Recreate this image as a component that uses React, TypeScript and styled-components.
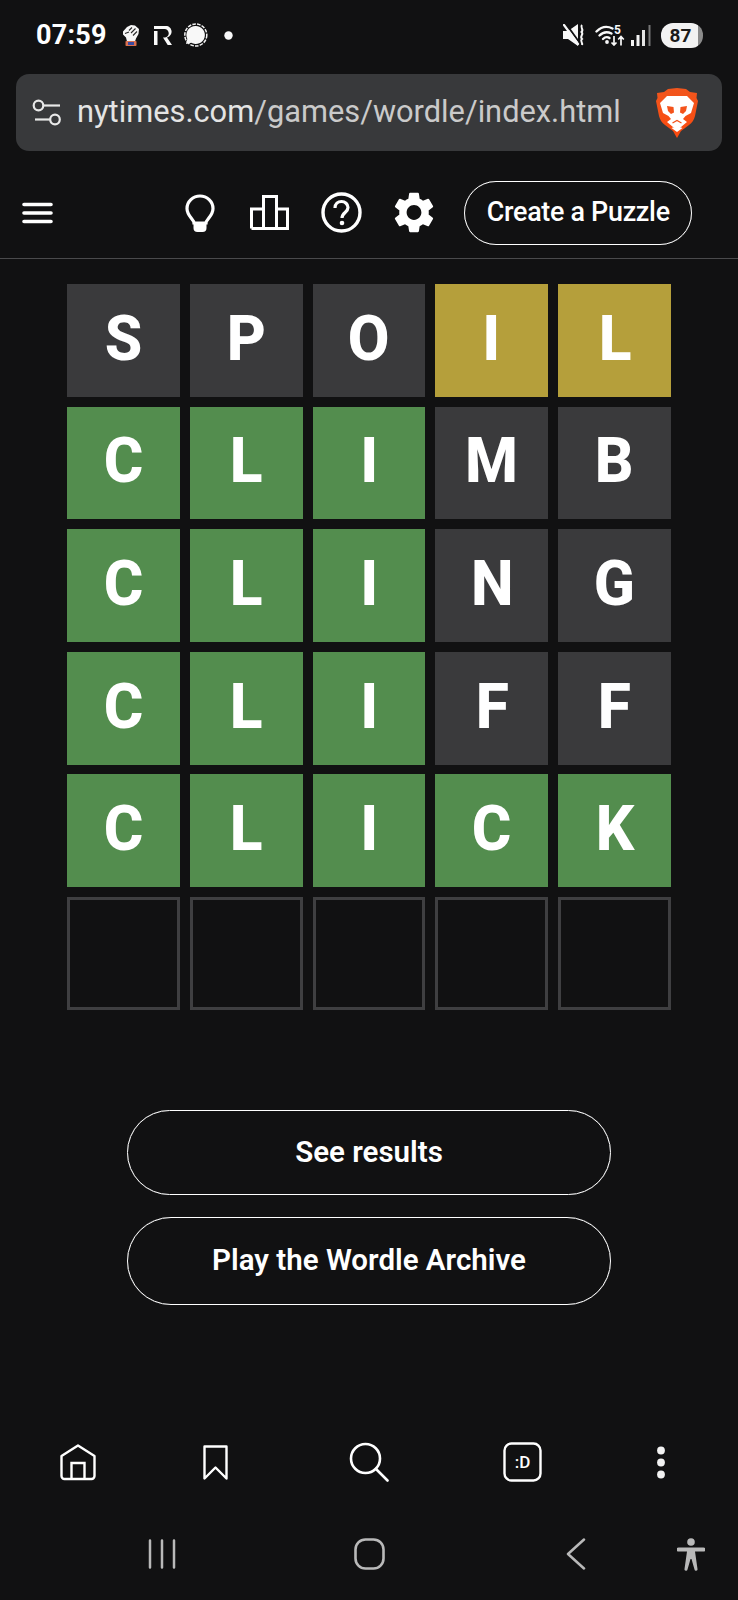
import React from 'react';
import styled, { createGlobalStyle } from 'styled-components';

const GlobalStyle = createGlobalStyle`
  html, body {
    margin: 0;
    padding: 0;
    background: #111112;
  }
  * {
    box-sizing: border-box;
  }
`;

const Page = styled.div`
  width: 738px;
  height: 1600px;
  display: flex;
  flex-direction: column;
  overflow: hidden;
  background: #111112;
  color: #fff;
  font-family: Roboto, 'Noto Sans', sans-serif;
`;

const StatusBar = styled.div`
  height: 74px;
  padding: 0 35px 4px 36px;
  display: flex;
  align-items: center;
  justify-content: space-between;
`;

const StatusGroup = styled.div`
  display: flex;
  align-items: center;
`;

const Clock = styled.span`
  font-size: 27px;
  font-weight: 700;
  letter-spacing: 0.2px;
  margin-right: 15px;
`;

const Battery = styled.span`
  width: 42px;
  height: 25px;
  margin-left: 10px;
  border-radius: 12px;
  background: linear-gradient(to right, #f2f2f2 87%, #8b8b8b 87%);
  color: #1a1a1a;
  font-size: 19px;
  font-weight: 700;
  display: flex;
  align-items: center;
  justify-content: center;
  padding-right: 3px;
`;

const UrlBar = styled.div`
  height: 77px;
  margin: 0 16px;
  padding: 0 24px 0 16px;
  border-radius: 13px;
  background: #38393b;
  display: flex;
  align-items: center;
`;

const Url = styled.div`
  flex: 1;
  margin-left: 15px;
  font-size: 30.8px;
  white-space: nowrap;
  color: #cacaca;
  padding-bottom: 2px;
`;

const UrlHost = styled.span`
  color: #e4e4e4;
`;

const Header = styled.header`
  height: 108px;
  padding: 16px 46px 0 22px;
  border-bottom: 1px solid #4a4a4c;
  display: flex;
  align-items: center;
`;

const HeaderIcons = styled.div`
  margin-left: auto;
  margin-right: 30px;
  display: flex;
  align-items: center;
  gap: 32px;
`;

const CreateButton = styled.button`
  width: 228px;
  height: 64px;
  border: 1px solid #fff;
  box-shadow: 0 0 0.6px rgba(255, 255, 255, 0.8);
  border-radius: 32px;
  background: transparent;
  color: #fff;
  font-family: inherit;
  padding: 0 0 3px;
`;

const CreateLabel = styled.span`
  display: inline-block;
  font-size: 28px;
  font-weight: 500;
  letter-spacing: -0.3px;
  white-space: nowrap;
  transform: scaleX(0.96);
`;

const Board = styled.div`
  width: 604px;
  margin: 25px auto 0;
  display: grid;
  grid-template-columns: repeat(5, 1fr);
  grid-auto-rows: 112.8px;
  column-gap: 10px;
  row-gap: 9.8px;
`;

const tileColors = {
  absent: '#3a3a3c',
  present: '#b59f3b',
  correct: '#538d4e',
  empty: 'transparent',
};

type TileState = keyof typeof tileColors;

const Tile = styled.div<{ $state: TileState }>`
  background: ${(p) => tileColors[p.$state]};
  border: ${(p) => (p.$state === 'empty' ? '3px solid #3f3f41' : 'none')};
  display: flex;
  align-items: center;
  justify-content: center;
`;

const Letter = styled.span`
  display: block;
  font-size: 63px;
  font-weight: 800;
  line-height: 1;
  transform: scaleX(0.96);
  padding-bottom: 4px;
`;

const Actions = styled.div`
  width: 484px;
  margin: 100.5px auto 0;
  display: flex;
  flex-direction: column;
  gap: 22px;
`;

const ActionButton = styled.button<{ $tall?: boolean }>`
  height: ${(p) => (p.$tall ? 88 : 85)}px;
  border: 1px solid #fff;
  box-shadow: 0 0 0.6px rgba(255, 255, 255, 0.8);
  border-radius: 44px;
  background: transparent;
  color: #fff;
  font-family: Roboto, sans-serif;
  font-size: 29.5px;
  font-weight: 600;
  padding: 0 0 2px;
`;

const BottomNav = styled.nav`
  margin-top: auto;
  height: 40px;
  display: grid;
  grid-template-columns: 155px 120px 188px 118px 160px;
  align-items: center;
  justify-items: center;
`;

const SystemNav = styled.nav`
  position: relative;
  height: 32px;
  margin: 56px 0 30px;
  display: grid;
  grid-template-columns: 324px 90px 324px;
  align-items: center;
  justify-items: center;
`;

const AccessButton = styled.div`
  position: absolute;
  right: 33px;
  top: 0;
  line-height: 0;
`;

const rows: { letter: string; state: TileState }[][] = [
  [
    { letter: 'S', state: 'absent' },
    { letter: 'P', state: 'absent' },
    { letter: 'O', state: 'absent' },
    { letter: 'I', state: 'present' },
    { letter: 'L', state: 'present' },
  ],
  [
    { letter: 'C', state: 'correct' },
    { letter: 'L', state: 'correct' },
    { letter: 'I', state: 'correct' },
    { letter: 'M', state: 'absent' },
    { letter: 'B', state: 'absent' },
  ],
  [
    { letter: 'C', state: 'correct' },
    { letter: 'L', state: 'correct' },
    { letter: 'I', state: 'correct' },
    { letter: 'N', state: 'absent' },
    { letter: 'G', state: 'absent' },
  ],
  [
    { letter: 'C', state: 'correct' },
    { letter: 'L', state: 'correct' },
    { letter: 'I', state: 'correct' },
    { letter: 'F', state: 'absent' },
    { letter: 'F', state: 'absent' },
  ],
  [
    { letter: 'C', state: 'correct' },
    { letter: 'L', state: 'correct' },
    { letter: 'I', state: 'correct' },
    { letter: 'C', state: 'correct' },
    { letter: 'K', state: 'correct' },
  ],
  Array.from({ length: 5 }, () => ({ letter: '', state: 'empty' as TileState })),
];

const FistIcon = () => (
  <svg width="18" height="22" viewBox="0 0 18 22" style={{ marginRight: 14 }}>
    <path d="M1 7.500 5 3l4-2 4 .5 4 3.500-.5 5-2.500 4.500-1 3H5l-1-4-3-3z" fill="#f6f6f6" />
    <path d="M7 6.500l3-3M9 9l4.500-4.500M11 11.500l4-4M3 9.500l4-1.500" stroke="#2a2a2a" strokeWidth="1.100" />
    <rect x="3.500" y="17" width="11" height="5" rx="0.800" fill="#d9704f" />
    <rect x="6" y="18" width="6" height="3" fill="#3a4aa0" />
  </svg>
);

const RevolutIcon = () => (
  <svg width="18" height="19" viewBox="0 0 18 19" style={{ marginRight: 11 }}>
    <path
      d="M0 5h3.500v14H0zM0 0h10.500a5.800 5.800 0 0 1 2.500 11.400L18 19h-4.300L9 11.500h1.500a4.250 4.250 0 0 0 0-8.500H0z"
      fill="#fafafa"
    />
  </svg>
);

const SignalIcon = () => (
  <svg width="25" height="25" viewBox="0 0 25 25" style={{ marginRight: 16 }}>
    <circle cx="12.800" cy="12" r="11" fill="none" stroke="#f4f4f4" strokeWidth="1.500" strokeDasharray="3.600 1.200" />
    <path d="M12.800 3a9 9 0 1 1-4.600 16.700L3 21l1.300-5A9 9 0 0 1 12.800 3z" fill="#f8f8f8" />
  </svg>
);

const DotIcon = () => (
  <svg width="9" height="9" viewBox="0 0 9 9">
    <circle cx="4.500" cy="4.500" r="4.200" fill="#f8f8f8" />
  </svg>
);

const MuteIcon = () => (
  <svg width="22" height="22" viewBox="0 0 22 22" style={{ marginRight: 10 }}>
    <path d="M0 7h5L15 0v22L5 15H0z" fill="#f8f8f8" />
    <path d="M3 0l14.500 20" stroke="#111112" strokeWidth="2" />
    <path d="M1 1l14 19" stroke="#f8f8f8" strokeWidth="2.200" strokeLinecap="round" />
    <path d="M19 1c-2.500 3 2.500 4-.5 7 3 2.500-2.500 4 .5 7-2.500 2 1 3 0 6" fill="none" stroke="#f8f8f8" strokeWidth="2" />
  </svg>
);

const WifiIcon = () => (
  <svg width="30" height="22" viewBox="0 0 30 22" style={{ marginRight: 6 }}>
    <g fill="none" stroke="#f8f8f8" strokeWidth="2.400" strokeLinecap="round">
      <path d="M1.500 7.500c5-5 11-5.500 16-3" />
      <path d="M4.500 11.500c3.500-3.500 8-4 12-2" />
      <path d="M8 15c2-2 4.500-2.300 6.500-1" />
    </g>
    <circle cx="12" cy="18" r="1.900" fill="#f8f8f8" />
    <text x="19" y="10" fontFamily="Roboto, sans-serif" fontWeight="700" fontSize="12" fill="#f8f8f8">5</text>
    <path d="M19 12v9m-2.500-2.500L19 21l2.500-2.500M26 21.500v-9m-2.800 3 2.800-3 2.800 3" fill="none" stroke="#f8f8f8" strokeWidth="1.700" />
  </svg>
);

const BarsIcon = () => (
  <svg width="20" height="21" viewBox="0 0 20 21">
    <rect x="0" y="15" width="3" height="6" fill="#f4f4f4" />
    <rect x="5.500" y="10" width="3" height="11" fill="#f4f4f4" />
    <rect x="11" y="5" width="3" height="16" fill="#e4e4e4" />
    <rect x="17.500" y="0" width="2" height="21" fill="#777" />
  </svg>
);

const TuneIcon = () => (
  <svg width="30" height="28" viewBox="0 0 30 28">
    <g fill="none" stroke="#e8e8e8" strokeWidth="2.200">
      <circle cx="6.500" cy="6.500" r="4.800" />
      <path d="M12 6.500h16" />
      <circle cx="23" cy="20.500" r="4.800" />
      <path d="M3 20.500h15" />
    </g>
  </svg>
);

const BraveIcon = () => (
  <svg width="42" height="50" viewBox="0 0 42 50">
    <defs>
      <linearGradient id="brave-shield" x1="0" y1="0" x2="0" y2="1">
        <stop offset="0" stopColor="#f1561d" />
        <stop offset="1" stopColor="#fb4a0f" />
      </linearGradient>
    </defs>
    <path
      d="M12 1 21 0l9 1 4 3 7 1-.5 5 1.500 3-3 15c-1 4-3 7-6 9l-8 6-4 7-4-7-8-6c-3-2-5-5-6-9L0 13l1.500-3L1 5l7-1z"
      fill="url(#brave-shield)"
    />
    <path
      d="M11 8H31l7 7-3 10-5.500 3-2.500 3 4 3-6 5H17l-6-5 4-3-2.500-3L7 25 4 15z"
      fill="#fff"
    />
    <path d="M11 18l6.500 1L18 24.500 15 26l-3-3zM31 18l-6.500 1L24 24.500l3 1.500 3-3z" fill="#f4531b" />
    <path d="M16.500 35l4.500-2.500 4.500 2.500" fill="none" stroke="#f4531b" strokeWidth="1.300" />
    <path d="M15.500 40 21 38l5.500 2L21 44z" fill="#fff" />
  </svg>
);

const MenuIcon = () => (
  <svg width="31" height="22" viewBox="0 0 31 22">
    <g stroke="#fff" strokeWidth="3.600" strokeLinecap="round">
      <path d="M2 2.500h27M2 11h27M2 19.500h27" />
    </g>
  </svg>
);

const BulbIcon = () => (
  <svg width="30" height="38" viewBox="0 0 30 38" style={{ marginRight: 3 }}>
    <path
      d="M15 2C8 2 2 7.500 2 14.500c0 4.500 2.500 7.500 4.500 10 1.500 1.800 2.500 3 2.500 4.500h12c0-1.500 1-2.700 2.500-4.500 2-2.500 4.500-5.500 4.500-10C28 7.500 22 2 15 2z"
      fill="none"
      stroke="#fff"
      strokeWidth="3.200"
    />
    <path d="M8.500 28h13v6a4 4 0 0 1-4 4h-5a4 4 0 0 1-4-4z" fill="#fff" />
  </svg>
);

const StatsIcon = () => (
  <svg width="39" height="35" viewBox="0 0 39 35">
    <path
      d="M1.500 33.500V14h12v19.500M13.500 33.500V1.500h13v32M26.500 33.500V14h11v19.500zM1.500 33.500h36"
      fill="none"
      stroke="#fff"
      strokeWidth="3"
    />
  </svg>
);

const HelpIcon = () => (
  <svg width="41" height="41" viewBox="0 0 41 41">
    <circle cx="20.500" cy="20.500" r="18.500" fill="none" stroke="#fff" strokeWidth="3.400" />
    <path d="M14 16c0-4 3-6.500 6.500-6.500S27 12 27 15.500c0 5-6 5-6 10.500" fill="none" stroke="#fff" strokeWidth="3.200" />
    <circle cx="21" cy="31" r="2.300" fill="#fff" />
  </svg>
);

const GearIcon = () => (
  <svg width="40" height="41" viewBox="2.600 2 18.800 20">
    <path
      fill="#fff"
      d="M19.140 12.940c.04-.3.060-.61.060-.94 0-.32-.020-.64-.070-.94l2.030-1.580a.49.490 0 0 0 .12-.61l-1.920-3.320a.488.488 0 0 0-.59-.22l-2.390.96c-.5-.38-1.030-.7-1.620-.94l-.36-2.540a.484.484 0 0 0-.48-.41h-3.840c-.24 0-.43.170-.47.410l-.36 2.540c-.59.240-1.130.570-1.620.94l-2.390-.96c-.22-.080-.47 0-.59.220L2.740 8.870c-.12.210-.08.470.12.610l2.030 1.580c-.050.300-.090.630-.090.940s.020.640.070.940l-2.030 1.580a.49.490 0 0 0-.12.610l1.920 3.320c.12.220.37.290.59.220l2.390-.96c.5.380 1.030.7 1.620.94l.36 2.540c.05.240.24.410.48.410h3.840c.24 0 .44-.17.470-.41l.36-2.540c.59-.24 1.130-.56 1.620-.94l2.390.96c.22.080.47 0 .59-.22l1.920-3.320c.12-.22.070-.47-.12-.61l-2.010-1.580zM12 15.600c-1.980 0-3.600-1.620-3.600-3.600s1.620-3.600 3.600-3.600 3.600 1.620 3.600 3.600-1.620 3.600-3.600 3.600z"
    />
  </svg>
);

const HomeIcon = () => (
  <svg width="36" height="37" viewBox="0 0 36 37">
    <path
      d="M1.500 12 18 1.500 34.500 12v20a3 3 0 0 1-3 3h-27a3 3 0 0 1-3-3z"
      fill="none"
      stroke="#fff"
      strokeWidth="2.400"
      strokeLinejoin="round"
    />
    <path d="M11.500 35V19h13v16" fill="none" stroke="#fff" strokeWidth="2.400" />
  </svg>
);

const BookmarkIcon = () => (
  <svg width="25" height="35" viewBox="0 0 25 35">
    <path d="M1.500 1.500h22v32l-11-11-11 11z" fill="none" stroke="#fff" strokeWidth="2.400" strokeLinejoin="round" />
  </svg>
);

const SearchIcon = () => (
  <svg width="40" height="40" viewBox="0 0 40 40">
    <circle cx="16.500" cy="16.500" r="14.500" fill="none" stroke="#fff" strokeWidth="2.600" />
    <path d="M27 27 38.500 38.500" stroke="#fff" strokeWidth="2.600" strokeLinecap="round" />
  </svg>
);

const TabsIcon = () => (
  <svg width="39" height="40" viewBox="0 0 39 40">
    <rect x="1.500" y="1.500" width="36" height="37" rx="7" fill="none" stroke="#fff" strokeWidth="2.400" />
    <text x="19.500" y="26" textAnchor="middle" fontFamily="Roboto, sans-serif" fontSize="17" fontWeight="500" fill="#fff">
      :D
    </text>
  </svg>
);

const MoreIcon = () => (
  <svg width="10" height="33" viewBox="0 0 10 33">
    <circle cx="5" cy="4.500" r="3.900" fill="#f2f2f2" />
    <circle cx="5" cy="16.500" r="3.900" fill="#f2f2f2" />
    <circle cx="5" cy="28.500" r="3.900" fill="#f2f2f2" />
  </svg>
);

const RecentsIcon = () => (
  <svg width="28" height="30" viewBox="0 0 28 30">
    <path d="M2 1.500v27M14 1.500v27M26 1.500v27" stroke="#b9b9b9" strokeWidth="2.500" strokeLinecap="round" />
  </svg>
);

const HomeKeyIcon = () => (
  <svg width="31" height="32" viewBox="0 0 31 32">
    <rect x="1.500" y="1.500" width="28" height="29" rx="10" fill="none" stroke="#b9b9b9" strokeWidth="2.600" />
  </svg>
);

const BackIcon = () => (
  <svg width="20" height="32" viewBox="0 0 20 32">
    <path d="M18 1.500 2 16l16 14.500" fill="none" stroke="#b9b9b9" strokeWidth="2.500" strokeLinecap="round" strokeLinejoin="round" />
  </svg>
);

const AccessibilityIcon = () => (
  <svg width="28" height="33" viewBox="0 0 28 33">
    <circle cx="14" cy="4" r="3.800" fill="#b9b9b9" />
    <path
      d="M1.500 9.500h25a1.500 1.500 0 0 1 0 4H18l2.500 17.500a1.500 1.500 0 0 1-3 .6L14.500 21h-1l-3 10.600a1.500 1.500 0 0 1-3-.6L10 13.500H1.500a1.500 1.500 0 0 1 0-4z"
      fill="#b9b9b9"
    />
  </svg>
);

const App: React.FC = () => (
  <Page>
    <GlobalStyle />
    <StatusBar>
      <StatusGroup>
        <Clock>07:59</Clock>
        <FistIcon />
        <RevolutIcon />
        <SignalIcon />
        <DotIcon />
      </StatusGroup>
      <StatusGroup>
        <MuteIcon />
        <WifiIcon />
        <BarsIcon />
        <Battery>87</Battery>
      </StatusGroup>
    </StatusBar>

    <UrlBar>
      <TuneIcon />
      <Url>
        <UrlHost>nytimes.com</UrlHost>/games/wordle/index.html
      </Url>
      <BraveIcon />
    </UrlBar>

    <Header>
      <MenuIcon />
      <HeaderIcons>
        <BulbIcon />
        <StatsIcon />
        <HelpIcon />
        <GearIcon />
      </HeaderIcons>
      <CreateButton>
        <CreateLabel>Create a Puzzle</CreateLabel>
      </CreateButton>
    </Header>

    <Board>
      {rows.flat().map((tile, i) => (
        <Tile key={i} $state={tile.state}>
          {tile.letter && <Letter>{tile.letter}</Letter>}
        </Tile>
      ))}
    </Board>

    <Actions>
      <ActionButton>See results</ActionButton>
      <ActionButton $tall>Play the Wordle Archive</ActionButton>
    </Actions>

    <BottomNav>
      <HomeIcon />
      <BookmarkIcon />
      <SearchIcon />
      <TabsIcon />
      <MoreIcon />
    </BottomNav>

    <SystemNav>
      <RecentsIcon />
      <HomeKeyIcon />
      <BackIcon />
      <AccessButton>
        <AccessibilityIcon />
      </AccessButton>
    </SystemNav>
  </Page>
);

export default App;
